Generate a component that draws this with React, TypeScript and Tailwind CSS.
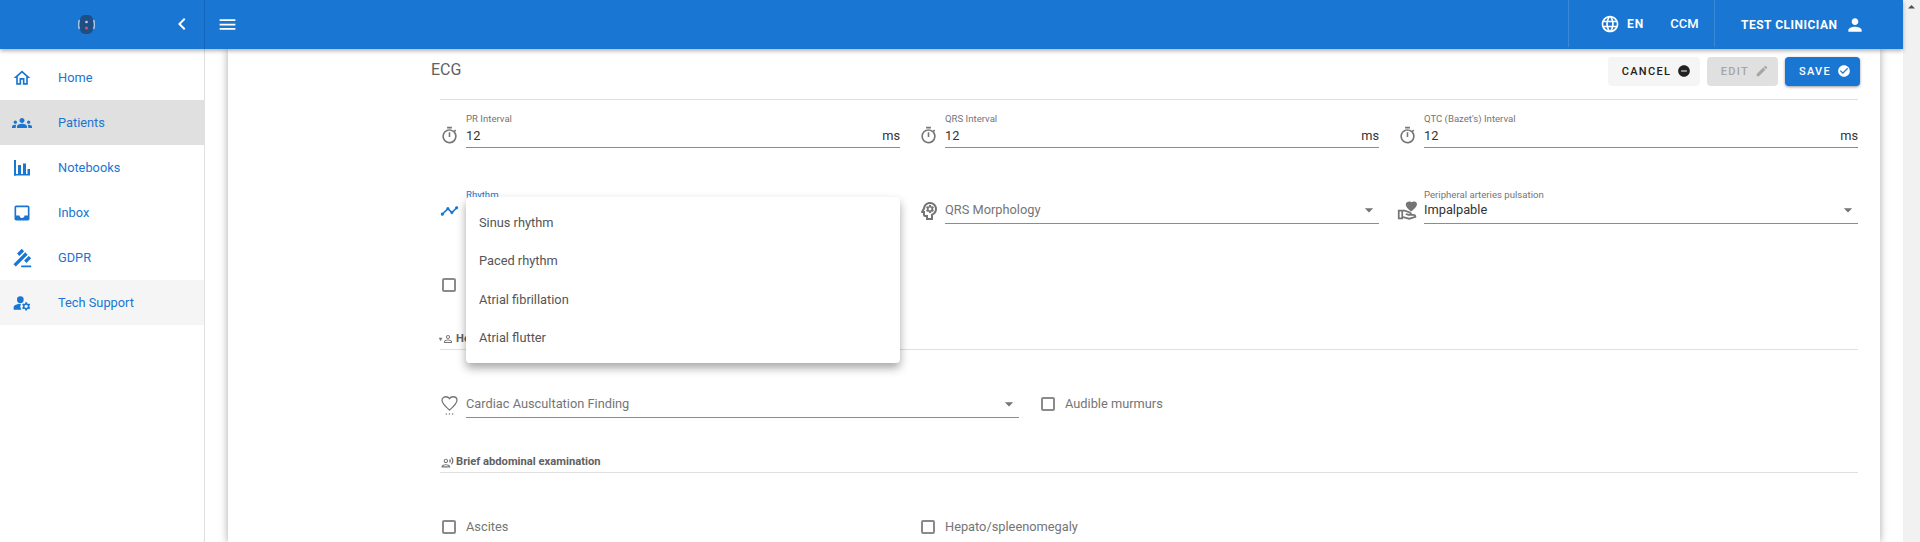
import type { ReactNode } from "react";
import {
  MdOutlineHome,
  MdGroups,
  MdInbox,
  MdGavel,
  MdManageAccounts,
  MdMenu,
  MdChevronLeft,
  MdLanguage,
  MdPerson,
  MdDoNotDisturbOn,
  MdEdit,
  MdCheckCircle,
  MdOutlineTimer,
  MdTimeline,
  MdOutlinePsychology,
  MdOutlineVolunteerActivism,
  MdFavorite,
  MdArrowDropDown,
  MdArrowDropUp,
  MdOutlineRecordVoiceOver,
  MdOutlinePersonOutline,
} from "react-icons/md";

function ChartIcon() {
  return (
    <svg viewBox="0 0 20 20" className="h-[20px] w-[20px]" fill="currentColor">
      <rect x="2" y="2" width="2" height="15.5" />
      <rect x="2" y="16" width="16" height="1.5" />
      <rect x="6" y="7" width="3" height="10" />
      <rect x="11" y="5.5" width="3" height="11.5" />
      <rect x="15.5" y="11" width="2.5" height="6" />
    </svg>
  );
}

function HeartIcon() {
  return (
    <svg viewBox="0 0 24 28" className="h-[22px] w-[19px] text-[#757575]">
      <path
        d="M12 20.5 C5 14.5 2.5 11.5 2.5 8 C2.5 5 5 3.5 7.5 3.5 C9.5 3.5 11 4.5 12 6 C13 4.5 14.5 3.5 16.5 3.5 C19 3.5 21.5 5 21.5 8 C21.5 11.5 19 14.5 12 20.5 Z"
        fill="none"
        stroke="currentColor"
        strokeWidth="1.6"
      />
      <circle cx="8" cy="25.5" r="0.9" fill="currentColor" />
      <circle cx="12" cy="25.5" r="0.9" fill="currentColor" />
      <circle cx="16" cy="25.5" r="0.9" fill="currentColor" />
    </svg>
  );
}

const navItems = [
  { label: "Home", icon: <MdOutlineHome size={20} />, bg: "" },
  { label: "Patients", icon: <MdGroups size={20} />, bg: "bg-[#e0e0e0]" },
  { label: "Notebooks", icon: <ChartIcon />, bg: "" },
  { label: "Inbox", icon: <MdInbox size={20} />, bg: "" },
  { label: "GDPR", icon: <MdGavel size={20} className="-scale-x-100" />, bg: "" },
  { label: "Tech Support", icon: <MdManageAccounts size={20} />, bg: "bg-[#f5f5f5]" },
];

const rhythmOptions = ["Sinus rhythm", "Paced rhythm", "Atrial fibrillation", "Atrial flutter"];

function IntervalField({ label }: { label: string }) {
  return (
    <div className="flex items-end gap-[7px]">
      <MdOutlineTimer size={19} className="mb-[3px] shrink-0 text-[#757575]" />
      <div className="flex-1 border-b border-[#8c8c8c] h-[35px] flex flex-col">
        <span className="text-[9.6px] leading-[12px] text-[#757575]">{label}</span>
        <div className="flex justify-between text-[12.8px] leading-[22px] text-[#333]">
          <span>12</span>
          <span>ms</span>
        </div>
      </div>
    </div>
  );
}

function SelectField({
  label,
  value,
  icon,
  className,
  active,
}: {
  label?: string;
  value?: string;
  icon: ReactNode;
  className?: string;
  active?: boolean;
}) {
  return (
    <div className={`flex items-end gap-[7px] ${className ?? ""}`}>
      <div className="mb-[4px] h-[19px] w-[19px] shrink-0 flex items-center justify-center">{icon}</div>
      <div className="flex-1 border-b border-[#8c8c8c] h-[35px] pb-[2px] flex flex-col justify-end relative">
        {label && value && (
          <span className={`absolute top-0 left-0 text-[9.6px] leading-[12px] ${active ? "text-[#1976d2]" : "text-[#757575]"}`}>
            {label}
          </span>
        )}
        <div className="flex justify-between items-center text-[12.8px] leading-[22px]">
          <span className={value ? "text-[#333]" : "text-[#757575]"}>{value ?? label}</span>
          <MdArrowDropDown size={20} className="text-[#757575]" />
        </div>
      </div>
    </div>
  );
}

function CheckItem({ label, className }: { label?: string; className?: string }) {
  return (
    <div className={`flex items-center gap-[10px] ${className ?? ""}`}>
      <span className="ml-[2px] w-[14px] h-[14px] rounded-[2px] border-2 border-[#8a8a8a] shrink-0" />
      {label && <span className="text-[12.8px] leading-[20px] text-[#757575]">{label}</span>}
    </div>
  );
}

function SectionTitle({ icon, title }: { icon: ReactNode; title: string }) {
  return (
    <div className="flex items-center gap-[2px] h-[20px] pb-[1px] border-b border-[#e0e0e0] text-[11.2px] font-bold text-[#616161]">
      <div className="w-[14px] flex justify-end shrink-0">{icon}</div>
      <span>{title}</span>
    </div>
  );
}

export default function App() {
  return (
    <div className="flex h-[542px] w-[1920px] overflow-hidden font-['Roboto',sans-serif]">
      <div className="flex-1 flex flex-col min-w-0">
        {/* HEADER */}
        <header className="relative z-20 h-[49px] shrink-0 bg-[#1976d2] text-white flex shadow-[0_2px_4px_rgba(0,0,0,0.3)]">
          <div className="relative w-[205px] shrink-0 border-r border-[#1565c0] flex items-center">
            <svg viewBox="0 0 17 19" className="ml-[78px] h-[19px] w-[17px]">
              <rect x="2" y="0" width="13" height="19" rx="5" fill="#1d4f86" />
              <path d="M1.5 5 C0 8 0 11 1.5 14 M15.5 5 C17 8 17 11 15.5 14" stroke="#a8c4e2" strokeWidth="1.5" fill="none" />
              <circle cx="8.5" cy="7" r="1.3" fill="#b9cfe6" />
              <circle cx="8.5" cy="13" r="1.6" fill="#d9534f" />
            </svg>
            <MdChevronLeft size={24} className="absolute left-[170px] top-[12px]" />
          </div>
          <MdMenu size={21} className="ml-[12px] self-center" />
          <div className="flex-1" />
          <div className="w-[147px] h-[47px] border-x border-[#3a8ad9] flex items-center text-[12px] font-bold tracking-[1px]">
            <MdLanguage size={20} className="ml-[31px]" />
            <span className="ml-[7px]">EN</span>
            <span className="ml-[26px] text-[13px] font-medium tracking-normal">CCM</span>
          </div>
          <div className="w-[188px] flex items-center text-[12px] font-bold tracking-[0.5px]">
            <span className="ml-[26px]">TEST CLINICIAN</span>
            <MdPerson size={20} className="ml-[7px]" />
          </div>
        </header>

        <div className="flex-1 flex min-h-0">
          {/* SIDEBAR */}
          <aside className="w-[205px] shrink-0 border-r border-[#e0e0e0] bg-white pt-[6px]">
            {navItems.map((item) => (
              <div key={item.label} className={`h-[45px] flex items-center text-[#1976d2] text-[12.8px] ${item.bg}`}>
                <div className="w-[58px] pl-[12px] shrink-0">{item.icon}</div>
                <span>{item.label}</span>
              </div>
            ))}
          </aside>

          {/* CARD */}
          <main className="flex-1 min-w-0 px-[23px] overflow-hidden">
            <div className="h-full bg-white shadow-[0_0_8px_rgba(0,0,0,0.35)] pl-[203px] pr-[20px] relative">
              {/* ECG TITLE + ACTIONS */}
              <div className="flex items-start justify-between h-[50px] pt-[8px]">
                <h2 className="mt-[1px] text-[16px] leading-[24px] text-[#616161]">ECG</h2>
                <div className="flex gap-[7px] text-[11px] font-medium tracking-[1.3px]">
                  <button className="h-[29px] w-[92px] pl-[5px] rounded bg-[#f5f5f5] text-[#212121] flex items-center justify-center gap-[6px]">
                    <span className="mt-[1px]">CANCEL</span> <MdDoNotDisturbOn size={14} className="-mt-[1px]" />
                  </button>
                  <button className="h-[29px] w-[71px] pl-[5px] rounded bg-[#e0e0e0] text-[#a6a6a6] flex items-center justify-center gap-[6px]">
                    <span className="mt-[1px]">EDIT</span> <MdEdit size={14} className="-mt-[1px]" />
                  </button>
                  <button className="h-[29px] w-[75px] pl-[5px] rounded bg-[#1976d2] text-white flex items-center justify-center gap-[6px] shadow-[0_1px_3px_rgba(0,0,0,0.4)]">
                    <span className="mt-[1px]">SAVE</span> <MdCheckCircle size={14} className="-mt-[1px]" />
                  </button>
                </div>
              </div>

              {/* FORM */}
              <div className="ml-[9px] mr-[2px] border-t border-[#e0e0e0]">
                <div className="grid grid-cols-3 gap-x-[19px] pt-[13px]">
                  <IntervalField label="PR Interval" />
                  <IntervalField label="QRS Interval" />
                  <IntervalField label="QTC (Bazet's) Interval" />
                </div>
                <div className="grid grid-cols-3 gap-x-[19px] mt-[41px]">
                  <SelectField active label="Rhythm" value=" " icon={<MdTimeline size={20} className="text-[#1976d2]" />} />
                  <SelectField label="QRS Morphology" icon={<MdOutlinePsychology size={24} className="shrink-0 text-[#757575]" />} />
                  <SelectField
                    label="Peripheral arteries pulsation"
                    value="Impalpable"
                    icon={
                      <div className="relative text-[#757575]">
                        <MdOutlineVolunteerActivism size={21} />
                        <MdFavorite size={12} className="absolute right-[0px] top-[0px]" />
                      </div>
                    }
                  />
                </div>
                <CheckItem className="mt-[54px]" />
                <div className="mt-[38px]">
                  <SectionTitle
                    icon={
                      <div className="flex items-center text-[#757575]">
                        <span className="text-[6px] leading-none">▾</span>
                        <MdOutlinePersonOutline size={12} />
                      </div>
                    }
                    title="He"
                  />
                </div>
                <div className="flex items-end mt-[33px]">
                  <SelectField className="w-[579px]" label="Cardiac Auscultation Finding" icon={<HeartIcon />} />
                  <CheckItem className="ml-[20px] mb-[4px]" label="Audible murmurs" />
                </div>
                <div className="mt-[35px]">
                  <SectionTitle icon={<MdOutlineRecordVoiceOver size={13} className="text-[#757575]" />} title="Brief abdominal examination" />
                </div>
                <div className="grid grid-cols-3 gap-x-[19px] mt-[44px]">
                  <CheckItem label="Ascites" />
                  <CheckItem label="Hepato/spleenomegaly" />
                </div>
              </div>

              {/* RHYTHM DROPDOWN */}
              <div className="absolute left-[238px] top-[148px] w-[434px] h-[166px] rounded bg-white py-[6px] shadow-[0_5px_10px_rgba(0,0,0,0.35)] z-10">
                {rhythmOptions.map((option) => (
                  <div key={option} className="h-[38.5px] flex items-center pl-[13px] text-[12.8px] text-[#555]">
                    {option}
                  </div>
                ))}
              </div>
            </div>
          </main>
        </div>
      </div>

      {/* SCROLLBAR */}
      <div className="w-[17px] shrink-0 bg-[#f1f1f1] flex justify-center">
        <MdArrowDropUp size={20} className="-mt-[3px] text-[#505050]" />
      </div>
    </div>
  );
}
